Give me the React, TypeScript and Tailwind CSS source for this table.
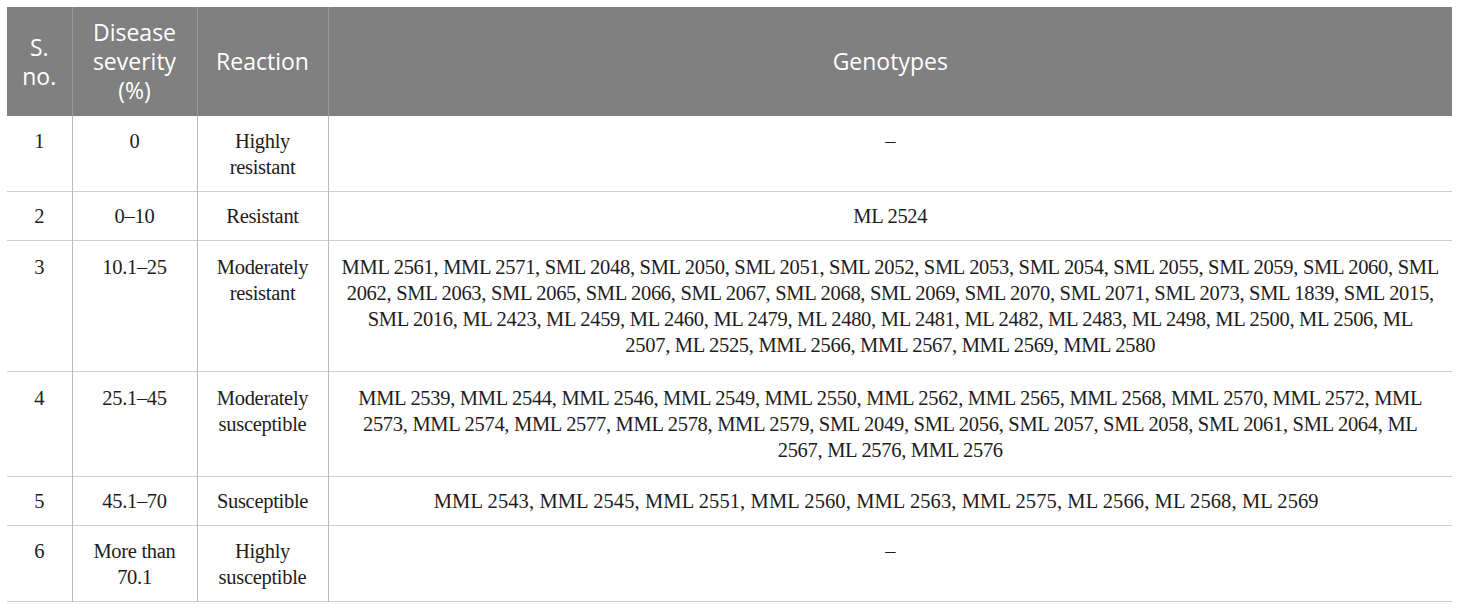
const rows: { no: string; sev: string[]; reaction: string[]; geno: string[]; pad: string; wide?: boolean }[] = [
  { no: "1", sev: ["0"], reaction: ["Highly", "resistant"], geno: ["–"], pad: "pt-[12px] pb-[11px]" },
  { no: "2", sev: ["0–10"], reaction: ["Resistant"], geno: ["ML 2524"], pad: "pt-[11px] pb-[11px]" },
  {
    no: "3",
    sev: ["10.1–25"],
    reaction: ["Moderately", "resistant"],
    geno: [
      "MML 2561, MML 2571, SML 2048, SML 2050, SML 2051, SML 2052, SML 2053, SML 2054, SML 2055, SML 2059, SML 2060, SML",
      "2062, SML 2063, SML 2065, SML 2066, SML 2067, SML 2068, SML 2069, SML 2070, SML 2071, SML 2073, SML 1839, SML 2015,",
      "SML 2016, ML 2423, ML 2459, ML 2460, ML 2479, ML 2480, ML 2481, ML 2482, ML 2483, ML 2498, ML 2500, ML 2506, ML",
      "2507, ML 2525, MML 2566, MML 2567, MML 2569, MML 2580",
    ],
    pad: "pt-[13px] pb-[13px]",
  },
  {
    no: "4",
    sev: ["25.1–45"],
    reaction: ["Moderately", "susceptible"],
    geno: [
      "MML 2539, MML 2544, MML 2546, MML 2549, MML 2550, MML 2562, MML 2565, MML 2568, MML 2570, MML 2572, MML",
      "2573, MML 2574, MML 2577, MML 2578, MML 2579, SML 2049, SML 2056, SML 2057, SML 2058, SML 2061, SML 2064, ML",
      "2567, ML 2576, MML 2576",
    ],
    pad: "pt-[13px] pb-[13px]",
  },
  {
    no: "5",
    sev: ["45.1–70"],
    reaction: ["Susceptible"],
    geno: ["MML 2543, MML 2545, MML 2551, MML 2560, MML 2563, MML 2575, ML 2566, ML 2568, ML 2569"],
    pad: "pt-[11px] pb-[11px]",
    wide: true,
  },
  { no: "6", sev: ["More than", "70.1"], reaction: ["Highly", "susceptible"], geno: ["–"], pad: "pt-[12px] pb-[11px]" },
];

function Lines({ lines }: { lines: string[] }) {
  return (
    <>
      {lines.map((l, i) => (
        <div key={i}>{l}</div>
      ))}
    </>
  );
}

export default function App() {
  return (
    <div className="bg-white w-[1460px] h-[608px] pt-[7px] pl-[7px]">
      <table className="w-[1445px] table-fixed border-collapse">
        <colgroup>
          <col className="w-[65px]" />
          <col className="w-[125px]" />
          <col className="w-[131px]" />
          <col />
        </colgroup>
        <thead>
          <tr className="bg-[#808080] text-white text-[23px] leading-[29px] font-['Open_Sans',sans-serif]">
            <th className="h-[109px] font-normal align-middle text-center border-r border-[#9a9a9a]">
              <div>S.</div>
              <div>no.</div>
            </th>
            <th className="font-normal align-middle text-center border-r border-[#9a9a9a]">
              <div>Disease</div>
              <div>severity</div>
              <div>(%)</div>
            </th>
            <th className="font-normal align-middle text-center border-r border-[#9a9a9a]">Reaction</th>
            <th className="font-normal align-middle text-center">Genotypes</th>
          </tr>
        </thead>
        <tbody className="text-[#1f1c1d] text-[20.5px] leading-[26px] tracking-[-0.3px] font-['Liberation_Serif',serif]">
          {rows.map((r) => (
            <tr key={r.no} className="border-b border-[#cfcfcf]">
              <td className={`align-top text-center border-r border-[#b9b9b9] ${r.pad}`}>{r.no}</td>
              <td className={`align-top text-center border-r border-[#b9b9b9] ${r.pad}`}>
                <Lines lines={r.sev} />
              </td>
              <td className={`align-top text-center border-r border-[#b9b9b9] ${r.pad}`}>
                <Lines lines={r.reaction} />
              </td>
              <td
                className={
                  r.wide
                    ? `align-top text-center whitespace-nowrap tracking-[0.1px] pr-[28px] ${r.pad}`
                    : `align-top text-center whitespace-nowrap ${r.pad}`
                }
              >
                <Lines lines={r.geno} />
              </td>
            </tr>
          ))}
        </tbody>
      </table>
    </div>
  );
}
